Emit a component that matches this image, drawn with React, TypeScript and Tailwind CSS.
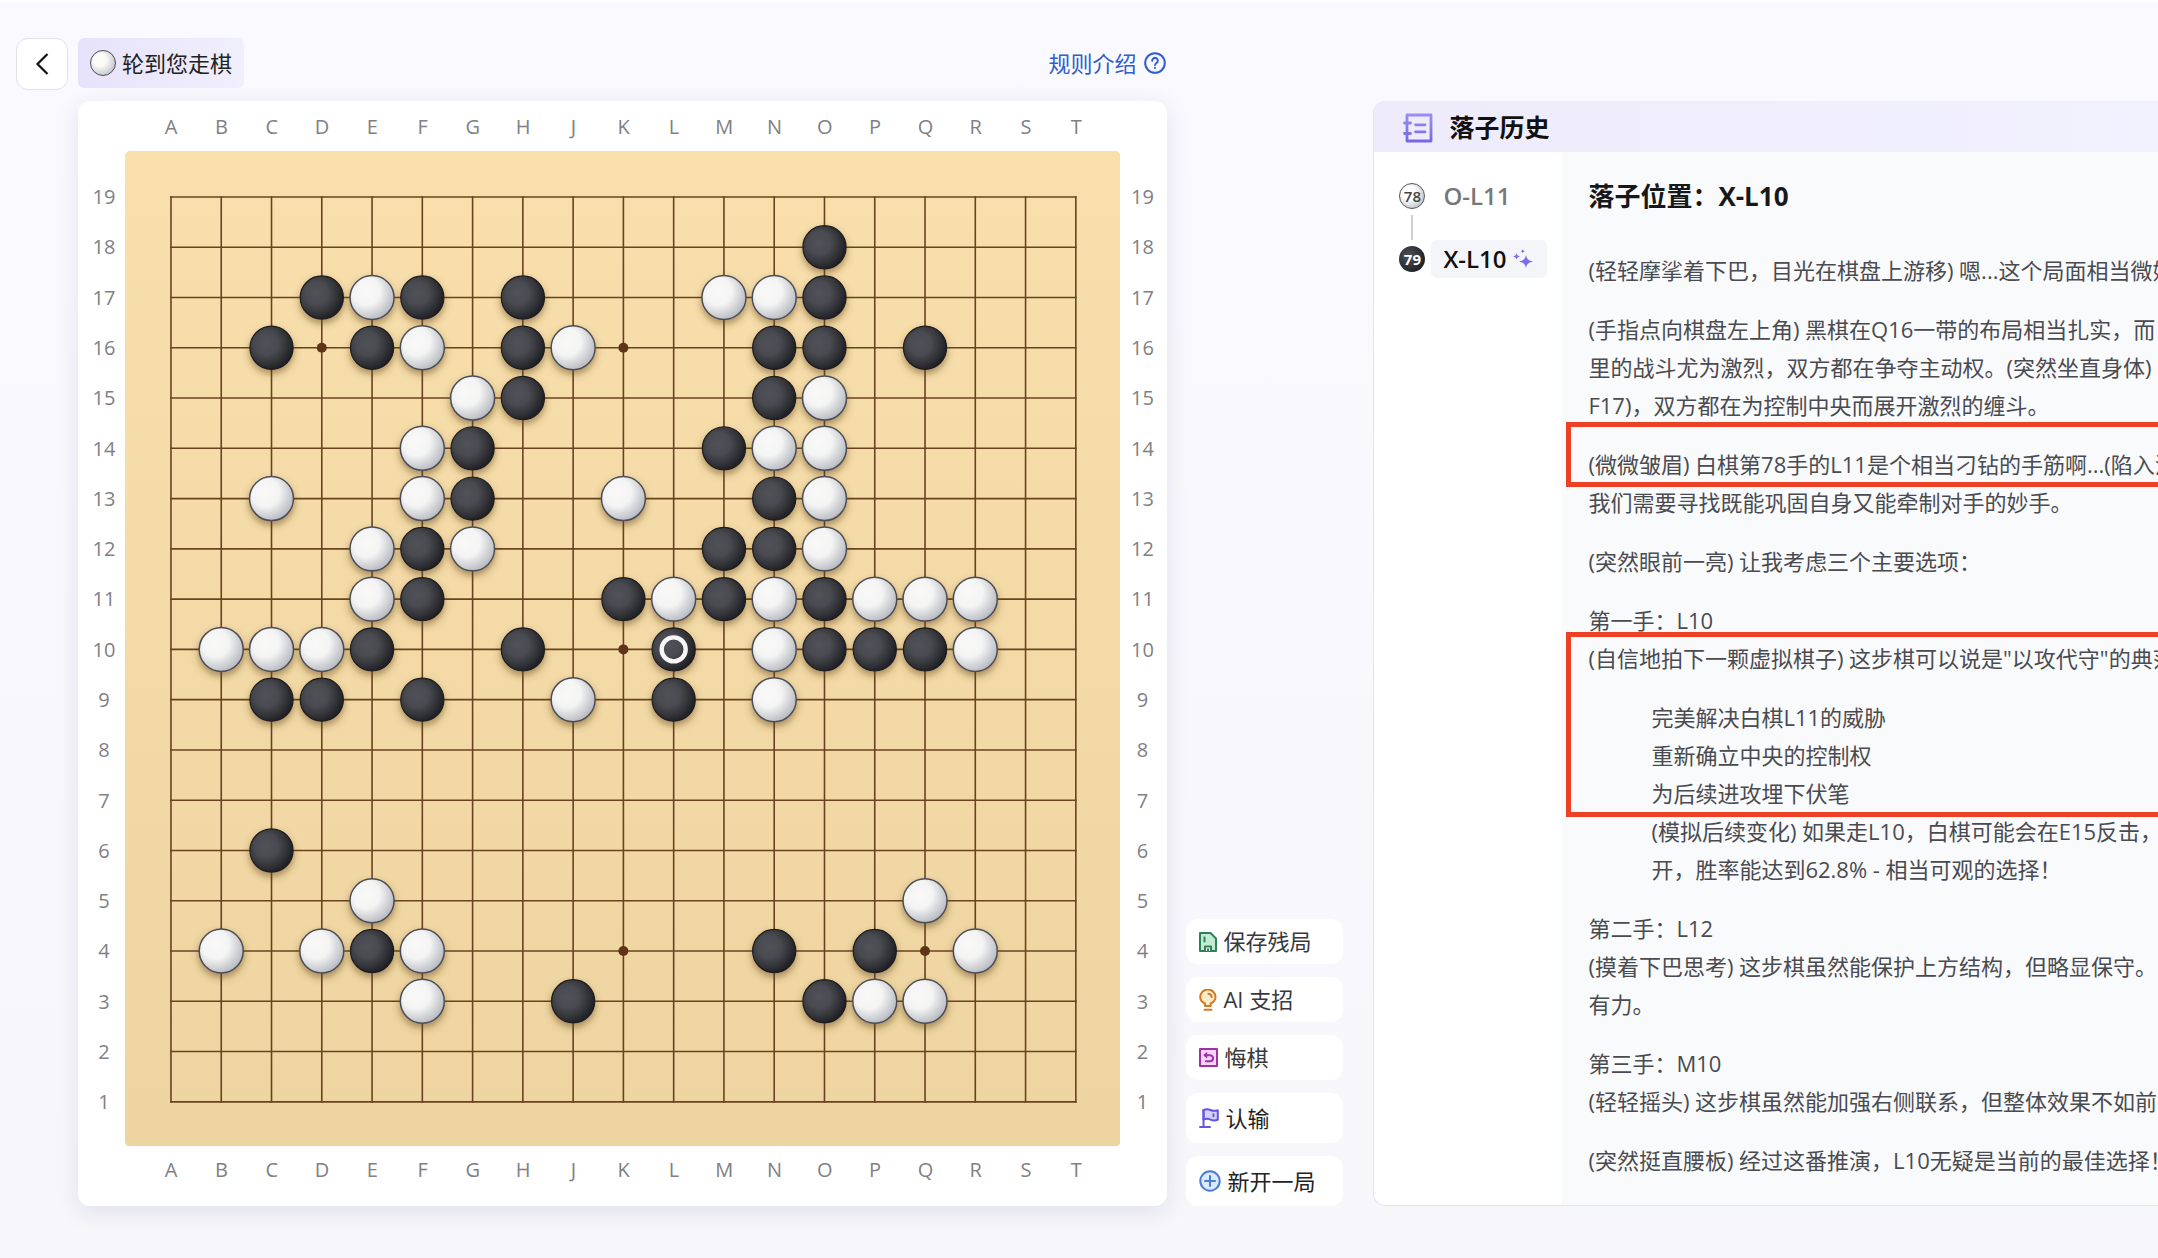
import React from "react";

type Color = "b" | "w";

const COLUMNS = "ABCDEFGHJKLMNOPQRST".split("");
const ROWS = Array.from({ length: 19 }, (_, i) => 19 - i);

const STONES: Record<number, string> = {
  18: "Ob",
  17: "Db Ew Fb Hb Mw Nw Ob",
  16: "Cb Eb Fw Hb Jw Nb Ob Qb",
  15: "Gw Hb Nb Ow",
  14: "Fw Gb Mb Nw Ow",
  13: "Cw Fw Gb Kw Nb Ow",
  12: "Ew Fb Gw Mb Nb Ow",
  11: "Ew Fb Kb Lw Mb Nw Ob Pw Qw Rw",
  10: "Bw Cw Dw Eb Hb Lb Nw Ob Pb Qb Rw",
  9: "Cb Db Fb Jw Lb Nw",
  6: "Cb",
  5: "Ew Qw",
  4: "Bw Dw Eb Fw Nb Pb Rw",
  3: "Fw Jb Ob Pw Qw",
};

const STARS = ["D", "K", "Q"].flatMap((c) => [4, 10, 16].map((r) => [c, r] as const));

const posX = (col: string) => 46 + COLUMNS.indexOf(col) * 50.3;
const posY = (row: number) => 46 + (19 - row) * 50.3;

const Stone: React.FC<{ x: number; y: number; color: Color }> = ({ x, y, color }) =>
  color === "b" ? (
    <circle cx={x} cy={y} r={21.6} fill="url(#black)" stroke="#1b1c1f" strokeWidth={1.2} />
  ) : (
    <circle cx={x} cy={y} r={22} fill="url(#white)" stroke="#4c4e57" strokeWidth={1.5} />
  );

const Board = () => (
  <svg viewBox="0 0 996 996" className="col-start-2 row-start-2 block w-full">
    <defs>
      <linearGradient id="wood" x1="0" y1="0" x2="0" y2="1">
        <stop offset="0" stopColor="#f8dfac" />
        <stop offset="1" stopColor="#edd4a0" />
      </linearGradient>
      <radialGradient id="black" cx="0.38" cy="0.4" r="0.64">
        <stop offset="0" stopColor="#515259" />
        <stop offset="0.4" stopColor="#4a4b51" />
        <stop offset="1" stopColor="#1f2024" />
      </radialGradient>
      <radialGradient id="white" cx="0.36" cy="0.36" r="0.7">
        <stop offset="0" stopColor="#faf9f8" />
        <stop offset="0.45" stopColor="#f4f4f4" />
        <stop offset="1" stopColor="#b4b7be" />
      </radialGradient>
      <filter id="shadow" x="-5%" y="-5%" width="110%" height="110%">
        <feDropShadow dx="0" dy="4" stdDeviation="3.5" floodColor="#5b3d12" floodOpacity="0.5" />
      </filter>
    </defs>
    <rect width="996" height="996" rx="5" fill="url(#wood)" />
    <g stroke="#69431f" strokeWidth={1.6} strokeLinecap="square">
      {COLUMNS.map((c) => (
        <line key={c} x1={posX(c)} x2={posX(c)} y1={posY(19)} y2={posY(1)} />
      ))}
      {ROWS.map((r) => (
        <line key={r} x1={posX("A")} x2={posX("T")} y1={posY(r)} y2={posY(r)} />
      ))}
    </g>
    {STARS.map(([c, r]) => (
      <circle key={c + r} cx={posX(c)} cy={posY(r)} r={5} fill="#5f3517" />
    ))}
    <g filter="url(#shadow)">
      {Object.entries(STONES).map(([row, list]) =>
        list.split(" ").map((s) => (
          <Stone key={s + row} x={posX(s[0])} y={posY(Number(row))} color={s[1] as Color} />
        ))
      )}
    </g>
    <circle cx={posX("L")} cy={posY(10)} r={12} fill="none" stroke="#f7f7f8" strokeWidth={4.4} />
  </svg>
);

const ColumnLabels: React.FC<{ className: string }> = ({ className }) => (
  <div className={`grid grid-cols-19 items-center pl-[21px] pr-[19px] text-center ${className}`}>
    {COLUMNS.map((c) => (
      <span key={c}>{c}</span>
    ))}
  </div>
);

const RowLabels: React.FC<{ className: string }> = ({ className }) => (
  <div className={`row-start-2 grid grid-rows-19 items-center pb-[19px] pt-[21px] text-center ${className}`}>
    {ROWS.map((r) => (
      <span key={r}>{r}</span>
    ))}
  </div>
);

const SaveIcon = () => (
  <svg width="18" height="20" viewBox="0 0 18 20" fill="#c3ead4" stroke="#2e8156" strokeWidth="2" strokeLinejoin="round">
    <path d="M1 1h10.500L17 6.500V19H1z" />
    <path d="M6 19v-4.500h6V19" fill="#fff" />
    <path d="M5.500 5.500v4" strokeLinecap="round" />
    <path d="M9 16.500V19" />
  </svg>
);

const BulbIcon = () => (
  <svg width="18" height="22" viewBox="0 0 18 22" fill="#fdeccb" stroke="#d07a26" strokeWidth="2" strokeLinecap="round">
    <path d="M6 17v-2.500C2.800 13 1.200 10.800 1.200 8.200a7.600 7.600 0 0 1 15.300 0c0 2.600-1.700 4.800-4.800 6.300V17z" strokeLinejoin="round" />
    <path d="M9.500 4.800c1.800.2 3 1.400 3.200 3.200" fill="none" />
    <path d="M5.500 20.800h7" />
  </svg>
);

const UndoIcon = () => (
  <svg width="19" height="19" viewBox="0 0 19 19" fill="none" stroke="#a02fa8" strokeWidth="2" strokeLinejoin="round">
    <path d="M1 1h17v17H1z" fill="#f4d3f6" />
    <path d="M6 7.200h5a3 3 0 0 1 0 6.100H7" strokeLinecap="round" />
    <path d="M7.800 4.600 4.800 7.200l3 2.600z" fill="#a02fa8" strokeWidth="1" />
  </svg>
);

const FlagIcon = () => (
  <svg width="20" height="20" viewBox="0 0 20 20" fill="none" stroke="#6355e0" strokeWidth="2" strokeLinecap="round" strokeLinejoin="round">
    <path d="M4.500 2c2.500-1.200 4.500-1.200 7 0s4.500 1 7.300.2v9.600c-2.800.9-4.800.9-7.300-.2s-4.500-1.200-7 0z" fill="#d5d0fb" />
    <path d="M4.500 2v17M1 19h10M14.500 6.200v2" />
  </svg>
);

const PlusIcon = () => (
  <svg width="22" height="22" viewBox="0 0 22 22" fill="none" stroke="#4a7bd6" strokeWidth="2" strokeLinecap="round">
    <circle cx="11" cy="11" r="9.700" fill="#dbe9fc" />
    <path d="M11 6v10M6 11h10" />
  </svg>
);

const NotebookIcon = () => (
  <svg width="30" height="30" viewBox="0 0 30 30" fill="none" stroke="url(#violet)" strokeWidth="2.800" strokeLinecap="round" strokeLinejoin="round">
    <defs>
      <linearGradient id="violet" x1="0" y1="0" x2="0" y2="30" gradientUnits="userSpaceOnUse">
        <stop offset="0" stopColor="#9a92f5" />
        <stop offset="1" stopColor="#7466e2" />
      </linearGradient>
    </defs>
    <path d="M4 2h24v26H4z" />
    <path d="M1.500 10h6M1.500 20.500h6M12.500 11.800h9.500M12.500 18.800h9.500" />
  </svg>
);

const SparkleIcon = () => (
  <svg width="20" height="20" viewBox="0 0 20 20" fill="#7c6fec">
    <path d="M13 6c.9 4 2.300 5.500 7 6.500-4.700 1-6.100 2.500-7 6.500-.9-4-2.300-5.500-7-6.500 4.700-1 6.100-2.500 7-6.500z" />
    <path d="M3.500 4c.5 2.200 1.100 2.900 3.500 3.400-2.400.5-3 1.200-3.500 3.400C3 8.600 2.400 7.900 0 7.400 2.400 6.900 3 6.200 3.500 4zM9.800 0c.3 1.500.8 2 2.400 2.300-1.600.3-2.100.8-2.400 2.300-.3-1.500-.8-2-2.400-2.300C9 2 9.500 1.500 9.800 0z" />
  </svg>
);

const ACTIONS = [
  { label: "保存残局", icon: <SaveIcon />, className: "h-[45px]" },
  { label: "AI 支招", icon: <BulbIcon />, className: "h-[45px]" },
  { label: "悔棋", icon: <UndoIcon />, className: "h-[45px]" },
  { label: "认输", icon: <FlagIcon />, className: "h-[50px] text-[#222]" },
  { label: "新开一局", icon: <PlusIcon />, className: "h-[50px] text-[#222]" },
];

const Frame: React.FC<{ className: string }> = ({ className }) => (
  <div className={`pointer-events-none absolute -left-[22px] -right-5 border-[5px] border-[#ee4024] ${className}`} />
);

const Analysis = () => (
  <article className="relative min-w-0 flex-1 bg-[#f9fafc] pl-[26px] pt-[25px] text-[22px] leading-[38px] whitespace-nowrap text-[#4a4b50]">
    <h3 className="mb-9 text-[26px] font-bold text-[#17181a]">落子位置：X-L10</h3>
    <div className="flex flex-col gap-[21px]">
      <p>(轻轻摩挲着下巴，目光在棋盘上游移) 嗯...这个局面相当微妙</p>
      <p>
        (手指点向棋盘左上角) 黑棋在Q16一带的布局相当扎实，而
        <br />
        里的战斗尤为激烈，双方都在争夺主动权。(突然坐直身体)
        <br />
        F17)，双方都在为控制中央而展开激烈的缠斗。
      </p>
      <div className="relative">
        <Frame className="-top-[23px] h-[65px]" />
        <p>
          (微微皱眉) 白棋第78手的L11是个相当刁钻的手筋啊...(陷入沉
          <br />
          我们需要寻找既能巩固自身又能牵制对手的妙手。
        </p>
      </div>
      <p>(突然眼前一亮) 让我考虑三个主要选项：</p>
      <div>
        <p>第一手：L10</p>
        <div className="relative flex flex-col gap-[21px]">
          <Frame className="-top-[7px] h-[185px]" />
          <p>(自信地拍下一颗虚拟棋子) 这步棋可以说是"以攻代守"的典范</p>
          <ul className="pl-[63px]">
            <li>完美解决白棋L11的威胁</li>
            <li>重新确立中央的控制权</li>
            <li>
              为后续进攻埋下伏笔
              <br />
              (模拟后续变化) 如果走L10，白棋可能会在E15反击，
              <br />
              开，胜率能达到62.8% - 相当可观的选择！
            </li>
          </ul>
        </div>
      </div>
      <p>
        第二手：L12
        <br />
        (摸着下巴思考) 这步棋虽然能保护上方结构，但略显保守。
        <br />
        有力。
      </p>
      <p>
        第三手：M10
        <br />
        (轻轻摇头) 这步棋虽然能加强右侧联系，但整体效果不如前
      </p>
      <p>(突然挺直腰板) 经过这番推演，L10无疑是当前的最佳选择！</p>
    </div>
  </article>
);

const App: React.FC = () => {
  return (
    <main className="flex min-h-screen items-start overflow-hidden border-t-2 border-white bg-linear-to-b from-[#faf9ff] to-[#f6f6fb] pl-4 pt-9 font-['Open_Sans','Noto_Sans_CJK_SC',sans-serif]">
      <div className="flex min-w-0 flex-1 items-stretch">
        <div className="min-w-0 flex-[1152]">
          <header className="mb-[11px] flex h-[52px] items-start">
            <button aria-label="返回" className="flex size-[52px] items-center justify-center rounded-xl border border-[#e2e1e8] bg-white">
              <svg width="14" height="22" viewBox="0 0 14 22" fill="none" stroke="#111" strokeWidth="2.200">
                <path d="M12.500 1 2.500 11l10 10" />
              </svg>
            </button>
            <div className="ml-[10px] flex h-[50px] items-center gap-[6px] rounded-md bg-linear-to-r from-[#e7e2fb] to-[#f0effd] px-3 text-[22px] text-[#222]">
              <span className="size-[26px] rounded-full border border-[#4c4e57] bg-radial-[at_38%_38%] from-[#fbfaf9] from-30% to-[#bfc2c8] to-80%" />
              轮到您走棋
            </div>
            <a href="#rules" className="ml-auto mr-px flex h-[50px] items-center gap-2 text-[22px] text-[#2f5fca]">
              规则介绍
              <svg width="22" height="22" viewBox="0 0 22 22" fill="none" stroke="currentColor" strokeWidth="2" strokeLinecap="round">
                <circle cx="11" cy="11" r="9.800" />
                <path d="M8.200 8.800a2.800 2.800 0 1 1 4.400 2.200c-1 .7-1.600 1.100-1.600 2" />
                <path d="M11 15.800v.3" />
              </svg>
            </a>
          </header>
          <div className="ml-[62px] grid grid-cols-[47px_1fr_47px] rounded-xl bg-white pb-3 text-[20px] leading-6 text-[#808085] shadow-[0_6px_24px_rgba(40,30,90,0.10)]">
            <ColumnLabels className="col-start-2 row-start-1 h-[50px] pt-[2px]" />
            <RowLabels className="col-start-1 pl-[5px]" />
            <Board />
            <RowLabels className="col-start-3 pr-[3px]" />
            <ColumnLabels className="col-start-2 row-start-3 h-12" />
          </div>
        </div>

        <div className="ml-[19px] flex w-[157px] flex-col justify-end gap-[13px] text-[22px] text-[#38393c]">
          {ACTIONS.map((a) => (
            <button key={a.label} className={`flex items-center gap-[6px] rounded-xl bg-white pl-[13px] ${a.className}`}>
              {a.icon}
              {a.label}
            </button>
          ))}
        </div>

        <section className="ml-[30px] mt-[63px] flex min-w-0 flex-[784] flex-col overflow-hidden rounded-l-xl border-b border-l border-[#e4e2f6] bg-white">
          <header className="flex h-[51px] shrink-0 items-center gap-4 bg-linear-to-r from-[#eeebfb] to-[#f2f1fe] pl-[29px] pt-[2px]">
            <NotebookIcon />
            <h2 className="text-[25px] font-bold text-[#111]">落子历史</h2>
          </header>
          <div className="flex flex-1">
            <nav className="w-[188px] shrink-0 pl-[25px] pt-[25px] text-[24px]">
              <div className="flex h-[38px] items-center">
                <span className="flex size-[26px] items-center justify-center rounded-full border border-[#55565c] bg-radial-[at_38%_38%] from-white from-30% to-[#bfc2c8] to-80% text-[15px] font-semibold text-[#444]">
                  78
                </span>
                <button className="ml-[6px] h-[38px] px-3 font-semibold text-[#77787b]">O-L11</button>
              </div>
              <div className="ml-3 h-[25px] w-[2px] bg-[#d0d0d4]" />
              <div className="flex h-[38px] items-center">
                <span className="flex size-[26px] items-center justify-center rounded-full bg-radial-[at_38%_38%] from-[#505158] to-[#1d1e22] to-80% text-[15px] font-bold text-white">
                  79
                </span>
                <button className="ml-[6px] flex h-[38px] items-center gap-[6px] rounded-md bg-[#f4f5f9] pl-3 pr-[14px] font-semibold text-[#111]">
                  X-L10
                  <SparkleIcon />
                </button>
              </div>
            </nav>
            <Analysis />
          </div>
        </section>
      </div>
    </main>
  );
};

export default App;
